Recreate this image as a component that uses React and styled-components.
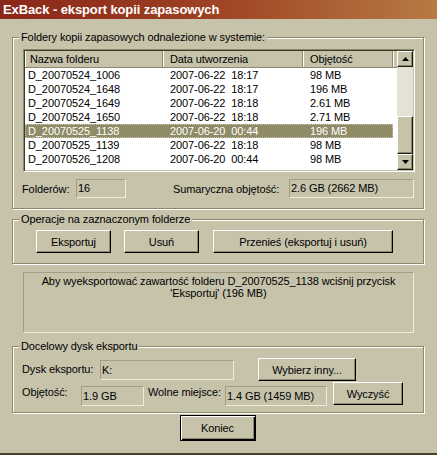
import styled, { createGlobalStyle } from "styled-components";

const FACE = "#c7c3ab";
const SHADOW = "#8c896a";

const Global = createGlobalStyle`
  html, body { margin: 0; padding: 0; background: ${FACE}; }
  * { box-sizing: border-box; }
  body {
    font-family: "Liberation Sans", Arial, sans-serif;
    font-size: 11px;
    letter-spacing: -0.1px;
    color: #000;
  }
`;

const Window = styled.div`
  width: 437px;
  height: 455px;
  background: ${FACE};
  display: flex;
  flex-direction: column;
  overflow: hidden;
  border-bottom: 2px solid #45432f;
`;

const TitleBar = styled.div`
  height: 19px;
  flex: none;
  padding-left: 3px;
  background: linear-gradient(to right, #8a271a 0%, #9c3f22 45%, #b87a43 100%);
  color: #fff;
  font-weight: bold;
  font-size: 13px;
  line-height: 19px;
  white-space: nowrap;
`;

const Body = styled.div`
  flex: 1;
  display: flex;
  flex-direction: column;
  padding: 0 13px 0 12px;
`;

const Group = styled.div`
  position: relative;
  margin-top: ${(p) => p.$mt}px;
  padding: ${(p) => p.$pad};
  border: 1px solid ${SHADOW};
  box-shadow: inset 1px 1px 0 #fff, 1px 1px 0 #fff;
`;

const Legend = styled.span`
  position: absolute;
  top: -8px;
  left: 6px;
  padding: 0 2px;
  background: ${FACE};
  line-height: 14px;
  white-space: nowrap;
`;

const ListView = styled.div`
  width: 392px;
  height: 123px;
  display: flex;
  border: 1px solid;
  border-color: ${SHADOW} #fff #fff ${SHADOW};
  box-shadow: inset 1px 1px 0 #3c3a2a, inset -1px -1px 0 ${FACE};
  padding: 1px;
  background: #fff;
`;

const ListMain = styled.div`
  flex: 1;
  display: flex;
  flex-direction: column;
  overflow: hidden;
`;

const Header = styled.div`
  height: 17px;
  flex: none;
  display: flex;
  background: ${FACE};
  border-bottom: 1px solid ${SHADOW};
`;

const HeadCell = styled.div`
  width: ${(p) => p.$w}px;
  flex: ${(p) => (p.$fill ? 1 : "none")};
  padding-left: ${(p) => p.$pl}px;
  line-height: 16px;
  border-right: ${(p) => (p.$fill ? "none" : `1px solid ${SHADOW}`)};
  box-shadow: inset 1px 0 0 #fff;
  white-space: nowrap;
`;

const Rows = styled.div`
  padding-top: 0;
`;

const Row = styled.div`
  display: flex;
  height: 14px;
  width: 368px;
  line-height: 14px;
  background: ${(p) => (p.$sel ? "#8f8b66" : "transparent")};
  color: ${(p) => (p.$sel ? "#fff" : "#000")};
  outline: ${(p) => (p.$sel ? "1px dotted #c9c6b0" : "none")};
  outline-offset: -1px;
`;

const Cell = styled.div`
  width: ${(p) => p.$w}px;
  padding-left: ${(p) => p.$pl}px;
  white-space: pre;
`;

const ScrollBar = styled.div`
  width: 16px;
  flex: none;
  display: flex;
  flex-direction: column;
  background: #e4e2d4;
`;

const Raised = styled.div`
  height: ${(p) => p.$h}px;
  flex: none;
  background: ${FACE};
  border: 1px solid;
  border-color: #fff #1e1d14 #1e1d14 #fff;
  box-shadow: inset -1px -1px 0 ${SHADOW};
  display: flex;
  align-items: center;
  justify-content: center;
`;

const Track = styled.div`
  height: ${(p) => p.$h}px;
  flex: ${(p) => (p.$fill ? 1 : "none")};
`;

const Arrow = ({ down }) => (
  <svg width="7" height="4" viewBox="0 0 7 4">
    <path d={down ? "M0 0h7L3.5 4z" : "M0 4h7L3.5 0z"} fill="#000" />
  </svg>
);

const FieldRow = styled.div`
  display: flex;
  align-items: ${(p) => p.$align || "center"};
  margin-top: ${(p) => p.$mt || 0}px;
  height: ${(p) => p.$h}px;
`;

const Label = styled.div`
  width: ${(p) => p.$w}px;
  flex: none;
  margin-left: ${(p) => p.$ml || 0}px;
  margin-top: ${(p) => p.$mt || 0}px;
  white-space: nowrap;
`;

const ReadOnly = styled.div`
  width: ${(p) => p.$w}px;
  height: ${(p) => p.$h || 19}px;
  flex: none;
  margin-left: ${(p) => p.$ml || 0}px;
  margin-top: ${(p) => p.$mt || 0}px;
  border: 1px solid;
  border-color: #a29e84 #eeece2 #eeece2 #a29e84;
  padding-left: 1px;
  line-height: ${(p) => (p.$h || 19) - 2}px;
  white-space: nowrap;
`;

const Button = styled.button`
  width: ${(p) => p.$w}px;
  height: ${(p) => p.$h || 23}px;
  flex: none;
  margin-left: ${(p) => p.$ml || 0}px;
  margin-top: ${(p) => p.$mt || 0}px;
  padding: 0;
  font: inherit;
  letter-spacing: inherit;
  color: #000;
  background: ${FACE};
  border: 1px solid;
  border-color: ${(p) => (p.$default ? "#000" : "#fff #000 #000 #fff")};
  box-shadow: ${(p) =>
    p.$default
      ? `inset 1px 1px 0 #fff, inset -1px -1px 0 #000, inset -2px -2px 0 ${SHADOW}`
      : `inset -1px -1px 0 ${SHADOW}`};
  cursor: default;
`;

const ButtonRow = styled.div`
  display: flex;
`;

const InfoBox = styled.div`
  margin: 8px 0 0 11px;
  width: 391px;
  height: 61px;
  border: 1px solid;
  border-color: #a29e84 #eeece2 #eeece2 #a29e84;
  padding-top: 2px;
  text-align: center;
  line-height: 12px;
`;

const Footer = styled.div`
  display: flex;
  justify-content: center;
  margin-top: 2px;
  padding-right: 1px;
`;

const rows = [
  ["D_20070524_1006", "2007-06-22  18:17", "98 MB"],
  ["D_20070524_1648", "2007-06-22  18:17", "196 MB"],
  ["D_20070524_1649", "2007-06-22  18:18", "2.61 MB"],
  ["D_20070524_1650", "2007-06-22  18:18", "2.71 MB"],
  ["D_20070525_1138", "2007-06-20  00:44", "196 MB", true],
  ["D_20070525_1139", "2007-06-22  18:18", "98 MB"],
  ["D_20070526_1208", "2007-06-20  00:44", "98 MB"],
];

export default function App() {
  return (
    <Window>
      <Global />
      <TitleBar>ExBack - eksport kopii zapasowych</TitleBar>
      <Body>
        <Group $mt={18} $pad="11px 0 10px 10px">
          <Legend>Foldery kopii zapasowych odnalezione w systemie:</Legend>
          <ListView>
            <ListMain>
              <Header>
                <HeadCell $w={138} $pl={5}>Nazwa folderu</HeadCell>
                <HeadCell $w={140} $pl={7}>Data utworzenia</HeadCell>
                <HeadCell $w={90} $pl={7}>Objętość</HeadCell>
                <HeadCell $fill />
              </Header>
              <Rows>
                {rows.map(([name, date, size, sel]) => (
                  <Row key={name} $sel={sel}>
                    <Cell $w={138} $pl={3}>{name}</Cell>
                    <Cell $w={140} $pl={7}>{date}</Cell>
                    <Cell $w={90} $pl={7}>{size}</Cell>
                  </Row>
                ))}
              </Rows>
            </ListMain>
            <ScrollBar>
              <Raised $h={16}><Arrow /></Raised>
              <Track $h={49} />
              <Raised $h={38} />
              <Track $h={0} $fill />
              <Raised $h={16}><Arrow down /></Raised>
            </ScrollBar>
          </ListView>
          <FieldRow $mt={7} $h={19}>
            <Label $w={54} $ml={-1}>Folderów:</Label>
            <ReadOnly $w={50}>16</ReadOnly>
            <Label $w={116} $ml={47}>Sumaryczna objętość:</Label>
            <ReadOnly $w={125}>2.6 GB (2662 MB)</ReadOnly>
          </FieldRow>
        </Group>

        <Group $mt={10} $pad="10px 0 10px 23px">
          <Legend>Operacje na zaznaczonym folderze</Legend>
          <ButtonRow>
            <Button $w={75}>Eksportuj</Button>
            <Button $w={75} $ml={13}>Usuń</Button>
            <Button $w={180} $ml={14}>Przenieś (eksportuj i usuń)</Button>
          </ButtonRow>
        </Group>

        <InfoBox>
          Aby wyeksportować zawartość folderu D_20070525_1138 wciśnij przycisk
          <br />
          'Eksportuj' (196 MB)
        </InfoBox>

        <Group $mt={13} $pad="11px 0 6px 9px">
          <Legend>Docelowy dysk eksportu</Legend>
          <FieldRow $h={23}>
            <Label $w={78} $mt={-2}>Dysk eksportu:</Label>
            <ReadOnly $w={134} $h={20}>K:</ReadOnly>
            <Button $w={98} $ml={24}>Wybierz inny...</Button>
          </FieldRow>
          <FieldRow $h={24} $mt={1} $align="flex-start">
            <Label $w={59} $mt={4}>Objętość:</Label>
            <ReadOnly $w={63} $h={20} $mt={4}>1.9 GB</ReadOnly>
            <Label $w={77} $ml={4} $mt={4}>Wolne miejsce:</Label>
            <ReadOnly $w={102} $h={20} $mt={4}>1.4 GB (1459 MB)</ReadOnly>
            <Button $w={70} $ml={6}>Wyczyść</Button>
          </FieldRow>
        </Group>

        <Footer>
          <Button $w={76} $h={26} $default>Koniec</Button>
        </Footer>
      </Body>
    </Window>
  );
}
